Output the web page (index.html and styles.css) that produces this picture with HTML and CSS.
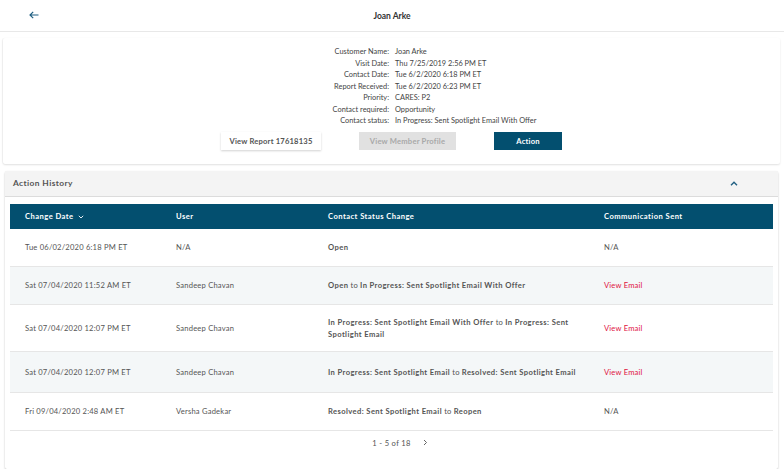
FILE: index.html
```html
<!DOCTYPE html>
<html>
<head>
<meta charset="utf-8">
<link rel="stylesheet" href="styles.css">
</head>
<body>
<header class="topbar">
  <span class="back"><svg width="10" height="8" viewBox="0 0 10 8"><path d="M9.5 4H1M4.2 0.8L1 4l3.2 3.2" fill="none" stroke="#1f5f82" stroke-width="1.2"/></svg></span>
  <h1 class="title">Joan Arke</h1>
</header>
<main class="wrap">
  <section class="card">
    <dl class="details">
      <dt>Customer Name:</dt><dd>Joan Arke</dd>
      <dt>Visit Date:</dt><dd>Thu 7/25/2019 2:56 PM ET</dd>
      <dt>Contact Date:</dt><dd>Tue 6/2/2020 6:18 PM ET</dd>
      <dt>Report Received:</dt><dd>Tue 6/2/2020 6:23 PM ET</dd>
      <dt>Priority:</dt><dd>CARES: P2</dd>
      <dt>Contact required:</dt><dd>Opportunity</dd>
      <dt>Contact status:</dt><dd>In Progress: Sent Spotlight Email With Offer</dd>
    </dl>
    <div class="buttons">
      <button class="btn btn-light">View Report 17618135</button>
      <button class="btn btn-disabled">View Member Profile</button>
      <button class="btn btn-primary">Action</button>
    </div>
  </section>
  <section class="panel">
    <div class="panel-head">
      <span class="panel-title">Action History</span>
      <svg class="chev" width="8" height="5" viewBox="0 0 8 5"><path d="M1 4.2L4 1.2l3 3" fill="none" stroke="#1f5f82" stroke-width="1.4"/></svg>
    </div>
    <div class="table">
      <div class="row head">
        <div class="cell">Change Date <svg width="6" height="4" viewBox="0 0 6 4"><path d="M0.8 0.8L3 3l2.2-2.2" fill="none" stroke="#fff" stroke-width="0.9"/></svg></div>
        <div class="cell">User</div>
        <div class="cell">Contact Status Change</div>
        <div class="cell">Communication Sent</div>
      </div>
      <div class="row">
        <div class="cell">Tue 06/02/2020 6:18 PM ET</div>
        <div class="cell">N/A</div>
        <div class="cell"><b>Open</b></div>
        <div class="cell">N/A</div>
      </div>
      <div class="row alt">
        <div class="cell">Sat 07/04/2020 11:52 AM ET</div>
        <div class="cell">Sandeep Chavan</div>
        <div class="cell"><b>Open</b> to <b>In Progress: Sent Spotlight Email With Offer</b></div>
        <div class="cell"><a class="link">View Email</a></div>
      </div>
      <div class="row">
        <div class="cell">Sat 07/04/2020 12:07 PM ET</div>
        <div class="cell">Sandeep Chavan</div>
        <div class="cell"><b>In Progress: Sent Spotlight Email With Offer</b> to <b>In Progress: Sent Spotlight Email</b></div>
        <div class="cell"><a class="link">View Email</a></div>
      </div>
      <div class="row alt tall">
        <div class="cell">Sat 07/04/2020 12:07 PM ET</div>
        <div class="cell">Sandeep Chavan</div>
        <div class="cell"><b>In Progress: Sent Spotlight Email</b> to <b>Resolved: Sent Spotlight Email</b></div>
        <div class="cell"><a class="link">View Email</a></div>
      </div>
      <div class="row">
        <div class="cell">Fri 09/04/2020 2:48 AM ET</div>
        <div class="cell">Versha Gadekar</div>
        <div class="cell"><b>Resolved: Sent Spotlight Email</b> to <b>Reopen</b></div>
        <div class="cell">N/A</div>
      </div>
    </div>
    <div class="pager">
      <span>1 - 5 of 18</span>
      <svg width="5" height="7" viewBox="0 0 5 7"><path d="M1 1l2.5 2.5L1 6" fill="none" stroke="#555" stroke-width="0.9"/></svg>
    </div>
  </section>
</main>
</body>
</html>
```
FILE: styles.css
```css
* { box-sizing: border-box; }
body {
  margin: 0;
  background: #fff;
  font-family: Lato, "Liberation Sans", sans-serif;
  font-size: 8px;
  color: #555;
}
.topbar {
  height: 32px;
  border-bottom: 1px solid #e8e8e8;
  display: flex;
  align-items: center;
  justify-content: center;
  position: relative;
}
.back {
  position: absolute;
  left: 29px;
  top: 11px;
}
.title {
  margin: 0;
  font-size: 8.5px;
  font-weight: 700;
  color: #333;
}
.wrap {
  padding: 0 4px 0 3px;
}
.card {
  margin-top: 6px;
  background: #fff;
  box-shadow: 0 1px 2px rgba(0,0,0,0.12), -1px 0 1px rgba(0,0,0,0.04);
  padding: 8px 0 14px;
  border-radius: 2px;
}
.details {
  margin: 0;
  display: grid;
  grid-template-columns: 386px 1fr;
  column-gap: 6px;
  line-height: 11.5px;
  font-size: 7.4px;
  color: #444;
}
.details dt { text-align: right; }
.details dd { margin: 0; }
.buttons {
  margin-top: 5px;
  display: flex;
  justify-content: center;
  gap: 38px;
}
.btn {
  height: 18px;
  border: 0;
  font-family: inherit;
  font-size: 7.6px;
  font-weight: 700;
  letter-spacing: 0.2px;
  padding: 0;
}
.btn-light {
  width: 100px;
  background: #fff;
  color: #555;
  box-shadow: 0 1px 2px rgba(0,0,0,0.18);
}
.btn-disabled {
  width: 97px;
  background: #e1e1e1;
  color: #a8a8a8;
}
.btn-primary {
  width: 68px;
  background: #034f6f;
  color: #fff;
}
.panel {
  margin: 7px 2px 0 2px;
  background: #fff;
  box-shadow: 0 1px 2px rgba(0,0,0,0.25);
  border-radius: 2px;
  padding-bottom: 14px;
}
.panel-head {
  height: 26px;
  background: #f4f4f4;
  border-bottom: 1px solid #dcdcdc;
  display: flex;
  align-items: center;
  justify-content: space-between;
  padding: 0 40px 0 8px;
}
.panel-title {
  font-weight: 700;
  font-size: 8.4px;
  letter-spacing: 0.4px;
  color: #555;
}
.table {
  margin: 7px 5px 0 5px;
}
.row {
  display: grid;
  grid-template-columns: 151px 152px 276px 1fr;
  align-items: center;
  min-height: 38px;
  border-bottom: 1px solid #e6e6e6;
  line-height: 12px;
  font-size: 7.6px;
  letter-spacing: 0.2px;
  color: #555;
}
.row.head {
  min-height: 25px;
  background: #034f6f;
  color: #fff;
  font-weight: 700;
  letter-spacing: 0.45px;
  border-bottom: 0;
}
.row.alt { background: #f4f7f8; }
.row.tall { min-height: 41px; }
.cell {
  padding: 11px 8px 11px 15px;
}
.row.head .cell { padding: 6px 15px; }
.row.head svg { margin-left: 2px; vertical-align: middle; }
.cell b { font-weight: 700; color: #555; letter-spacing: 0.4px; }
.link { color: #e0123f; }
.pager {
  height: 24px;
  display: flex;
  align-items: center;
  justify-content: center;
  gap: 12px;
  padding-left: 17px;
  font-size: 7.6px;
  letter-spacing: 0.3px;
  color: #555;
}
```
